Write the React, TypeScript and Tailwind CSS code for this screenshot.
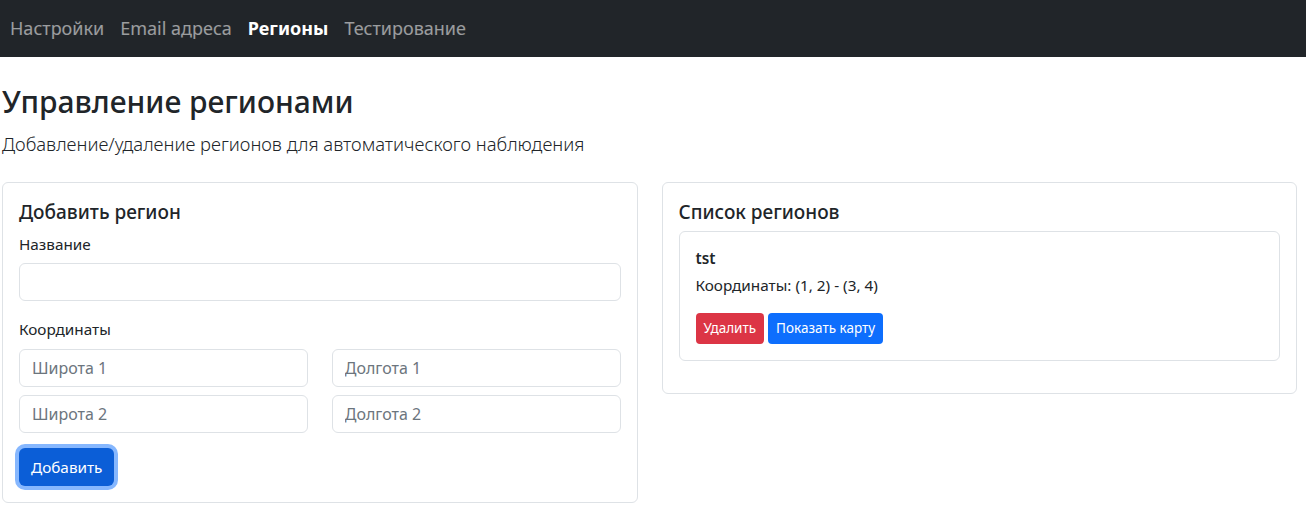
import React from 'react';

const font = { fontFamily: '"Noto Sans", "Open Sans", sans-serif' };

const navItems = [
  { label: 'Настройки', active: false },
  { label: 'Email адреса', active: false },
  { label: 'Регионы', active: true },
  { label: 'Тестирование', active: false },
];

function Field({ placeholder }: { placeholder?: string }) {
  return (
    <input
      type="text"
      placeholder={placeholder}
      className="w-full h-[38px] rounded-[6px] border border-[#dee2e6] bg-white px-3 text-[16px] text-[#212529] placeholder:text-[#6c757d] outline-none"
    />
  );
}

export default function App() {
  return (
    <div className="min-h-[518px] bg-white text-[#212529]" style={font}>
      {/* Navbar */}
      <nav className="h-[57px] bg-[#212529] flex items-center px-[2px]">
        {navItems.map((item) => (
          <a
            key={item.label}
            href="#"
            className={
              item.active
                ? 'px-2 text-[18px] font-bold text-white'
                : 'px-2 text-[18px] text-white/55'
            }
          >
            {item.label}
          </a>
        ))}
      </nav>

      <div className="pl-[2px] pr-[9px]">
        <h2 className="mt-[27px] text-[30px] leading-[1.2] font-medium">Управление регионами</h2>
        <p className="mt-[10px] text-[18.4px] font-light text-[#212529]">
          Добавление/удаление регионов для автоматического наблюдения
        </p>

        <div className="mt-[24px] grid grid-cols-2 gap-6 items-start">
          {/* Add region */}
          <div className="border border-[#dee2e6] rounded-[6px] p-4">
            <h5 className="text-[19px] leading-[1.2] font-medium mb-[10px] mt-[2px]">Добавить регион</h5>
            <label className="block text-[15.3px] mb-[7px]">Название</label>
            <Field />
            <label className="block text-[15.3px] mt-[17px] mb-[8px]">Координаты</label>
            <div className="grid grid-cols-2 gap-x-6 gap-y-2">
              <Field placeholder="Широта 1" />
              <Field placeholder="Долгота 1" />
              <Field placeholder="Широта 2" />
              <Field placeholder="Долгота 2" />
            </div>
            <button className="mt-[15px] h-[38px] px-3 rounded-[6px] bg-[#0b5ed7] text-white text-[15.3px] shadow-[0_0_0_4px_#86b7fe]">
              Добавить
            </button>
          </div>

          {/* Region list */}
          <div className="border border-[#dee2e6] rounded-[6px] p-4">
            <h5 className="text-[19px] leading-[1.2] font-medium mb-[8px] mt-[2px]">Список регионов</h5>
            <div className="border border-[#dee2e6] rounded-[6px] p-4 mb-4">
              <h6 className="text-[15.3px] leading-[1.2] font-semibold mb-[6px] mt-[1px]">tst</h6>
              <p className="text-[15.3px] mb-[16px]">Координаты: (1, 2) - (3, 4)</p>
              <div className="flex gap-1">
                <button className="h-[31px] px-2 rounded-[4px] bg-[#dc3545] text-white text-[13.5px]">Удалить</button>
                <button className="h-[31px] px-2 rounded-[4px] bg-[#0d6efd] text-white text-[13.5px]">Показать карту</button>
              </div>
            </div>
          </div>
        </div>
      </div>
    </div>
  );
}
